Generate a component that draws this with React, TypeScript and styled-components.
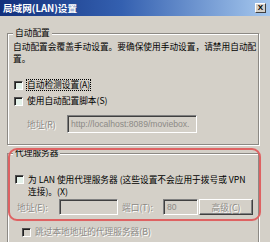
import React from "react";
import styled, { createGlobalStyle } from "styled-components";

const GlobalStyle = createGlobalStyle`
  html, body { margin: 0; padding: 0; background: #d4d0c8; }
  body { font-family: "Noto Sans CJK SC", "Liberation Sans", sans-serif; }
`;

const Dialog = styled.div({
  position: "relative",
  width: "270px",
  height: "242px",
  overflow: "hidden",
  display: "flex",
  flexDirection: "column",
  background: "#d4d0c8",
  fontSize: "8.7px",
  color: "#000",
});

const TitleBar = styled.div({
  height: "16px",
  flexShrink: 0,
  display: "flex",
  alignItems: "center",
  justifyContent: "space-between",
  padding: "0 4px 0 3px",
  background: "linear-gradient(90deg, #12307c 0%, #3460b0 45%, #a6c8ee 100%)",
});

const Title = styled.span({
  color: "#fff",
  fontWeight: "bold",
  fontSize: "9.6px",
  lineHeight: "12px",
});

const CloseButton = styled.div({
  width: "11px",
  height: "10px",
  boxSizing: "border-box",
  display: "flex",
  alignItems: "center",
  justifyContent: "center",
  background: "#d4d0c8",
  borderTop: "1px solid #fff",
  borderLeft: "1px solid #fff",
  borderRight: "1px solid #404040",
  borderBottom: "1px solid #404040",
  fontFamily: "'Liberation Sans', sans-serif",
  fontWeight: "bold",
  fontSize: "8px",
  lineHeight: "8px",
});

const Body = styled.div({
  display: "flex",
  flexDirection: "column",
  padding: "0 11px 0 7px",
});

const Group = styled.fieldset<{ $top: number; $bottom: number }>(({ $top, $bottom }) => ({
  margin: `${$top}px 0 0 0`,
  padding: `0 0 ${$bottom}px 0`,
  minWidth: 0,
  width: "252px",
  boxSizing: "border-box",
  border: "1px solid #8c8984",
  boxShadow: "inset 1px 1px 0 #fff, 1px 1px 0 #fff",
}));

const Legend = styled.legend({
  marginLeft: "5px",
  padding: "0 2px",
  lineHeight: "10px",
  background: "#d4d0c8",
});

const Desc = styled.div({
  margin: "3px 0 0 5px",
  lineHeight: "12px",
  whiteSpace: "nowrap",
});

const Row = styled.div<{ $left: number; $top: number; $line?: number }>(({ $left, $top, $line }) => ({
  display: "flex",
  alignItems: "flex-start",
  margin: `${$top}px 0 0 ${$left}px`,
  lineHeight: `${$line ?? 10}px`,
  whiteSpace: "nowrap",
}));

const FieldRow = styled.div<{ $left: number; $top: number }>(({ $left, $top }) => ({
  display: "flex",
  alignItems: "center",
  margin: `${$top}px 0 0 ${$left}px`,
  whiteSpace: "nowrap",
}));

const Check = styled.span<{ $disabled?: boolean }>(({ $disabled }) => ({
  width: "9px",
  height: "9px",
  flexShrink: 0,
  boxSizing: "border-box",
  marginTop: "1px",
  marginRight: "4px",
  borderTop: "1px solid #505050",
  borderLeft: "1px solid #505050",
  borderRight: "1px solid #fff",
  borderBottom: "1px solid #fff",
  background: $disabled ? "#d4d0c8" : "#e4f2ea",
  boxShadow: "inset 1px 1px 0 #202020",
}));

const Label = styled.span<{ $disabled?: boolean; $focus?: boolean; $width?: number }>(
  ({ $disabled, $focus, $width }) => ({
    color: $disabled ? "#8c8a86" : "#000",
    textShadow: $disabled ? "1px 1px 0 #fff" : "none",
    outline: $focus ? "1px dotted #000" : "none",
    outlineOffset: "0px",
    width: $width ? `${$width}px` : "auto",
    flexShrink: 0,
  })
);

const Field = styled.div<{ $width: number; $height: number }>(({ $width, $height }) => ({
  width: `${$width}px`,
  height: `${$height}px`,
  boxSizing: "border-box",
  display: "flex",
  alignItems: "center",
  paddingLeft: "3px",
  overflow: "hidden",
  background: "#d4d0c8",
  borderTop: "1px solid #808080",
  borderLeft: "1px solid #808080",
  borderRight: "1px solid #fff",
  borderBottom: "1px solid #fff",
  boxShadow: "inset 1px 1px 0 #404040",
  color: "#8c8a86",
  fontFamily: "'Liberation Sans', sans-serif",
  fontSize: "8.6px",
}));

const Button = styled.div({
  width: "54px",
  height: "16px",
  boxSizing: "border-box",
  display: "flex",
  alignItems: "center",
  justifyContent: "center",
  marginLeft: "1px",
  borderTop: "1px solid #fff",
  borderLeft: "1px solid #fff",
  borderRight: "1px solid #404040",
  borderBottom: "1px solid #404040",
  boxShadow: "inset -1px -1px 0 #808080",
  color: "#8c8a86",
  textShadow: "1px 1px 0 #fff",
});

const Annotation = styled.div({
  position: "absolute",
  left: "8px",
  top: "148px",
  width: "253px",
  height: "73px",
  boxSizing: "border-box",
  border: "2px solid #de6262",
  borderRadius: "9px",
  boxShadow: "0 0 1px #f2a8a8",
  pointerEvents: "none",
});

export default function App() {
  return (
    <>
      <GlobalStyle />
      <Dialog>
        <TitleBar>
          <Title>局域网(LAN)设置</Title>
          <CloseButton>X</CloseButton>
        </TitleBar>
        <Body>
          <Group $top={12} $bottom={11}>
            <Legend>自动配置</Legend>
            <Desc>
              自动配置会覆盖手动设置。要确保使用手动设置，请禁用自动配
              <br />
              置。
            </Desc>
            <Row $left={6} $top={15}>
              <Check />
              <Label $focus>自动检测设置(A)</Label>
            </Row>
            <Row $left={6} $top={6}>
              <Check />
              <Label>使用自动配置脚本(S)</Label>
            </Row>
            <FieldRow $left={19} $top={9}>
              <Label $disabled $width={40}>地址(R)</Label>
              <Field $width={130} $height={18}>http://localhost:8089/moviebox.</Field>
            </FieldRow>
          </Group>
          <Group $top={3} $bottom={20}>
            <Legend>代理服务器</Legend>
            <Row $left={7} $top={16} $line={12}>
              <Check />
              <Label>
                为 LAN 使用代理服务器 (这些设置不会应用于拨号或 VPN
                <br />
                连接)。(X)
              </Label>
            </Row>
            <FieldRow $left={9} $top={1}>
              <Label $disabled $width={42}>地址(E):</Label>
              <Field $width={59} $height={16} />
              <Label $disabled $width={45} style={{ paddingLeft: "4px", boxSizing: "border-box" }}>
                端口(T):
              </Label>
              <Field $width={35} $height={16}>80</Field>
              <Button>高级(C)</Button>
            </FieldRow>
            <Row $left={14} $top={12}>
              <Check $disabled />
              <Label $disabled>跳过本地地址的代理服务器(B)</Label>
            </Row>
          </Group>
        </Body>
        <Annotation />
      </Dialog>
    </>
  );
}
